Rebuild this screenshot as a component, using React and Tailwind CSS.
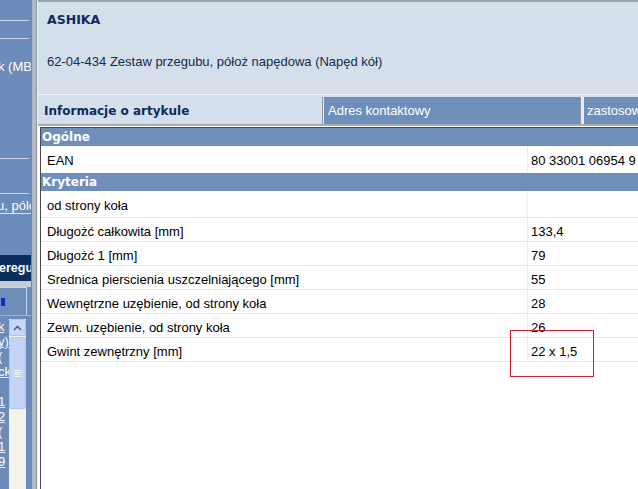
import React from "react";

const SANS = { fontFamily: '"Liberation Sans", Arial, sans-serif' };
const BOLD = { fontFamily: '"DejaVu Sans", Verdana, sans-serif' };

const kryteria = [
  ["od strony koła", ""],
  ["Długożć całkowita [mm]", "133,4"],
  ["Długożć 1 [mm]", "79"],
  ["Srednica pierscienia uszczelniającego [mm]", "55"],
  ["Wewnętrzne uzębienie, od strony koła", "28"],
  ["Zewn. uzębienie, od strony koła", "26"],
  ["Gwint zewnętrzny [mm]", "22 x 1,5"],
];

const listItems = ["k", "y)", "(", "ck", "", "1", "2", "(", "1", "9"];

function Sidebar() {
  return (
    <div className="w-[31px] shrink-0 h-full bg-[#6b8bba] flex flex-col overflow-hidden text-white text-[13px]" style={SANS}>
      <div className="h-[20px] shrink-0" />
      <div className="h-px bg-[#c9d6ea] mr-[2px] shrink-0" />
      <div className="h-[17px] shrink-0" />
      <div className="h-px bg-[#c9d6ea] mr-[2px] shrink-0" />
      <div className="h-[20px] shrink-0" />
      <div className="whitespace-nowrap -ml-[2px] leading-[15px] shrink-0">k (MB</div>
      <div className="h-[84px] shrink-0" />
      <div className="h-px bg-[#c9d6ea] mr-[2px] shrink-0" />
      <div className="h-[34px] shrink-0" />
      <div className="h-px bg-[#c9d6ea] mr-[2px] shrink-0" />
      <div className="h-[4px] shrink-0" />
      <div className="whitespace-nowrap -ml-[3px] leading-[15px] border-b border-[#dfe7f3] shrink-0">u, pólo</div>
      <div className="h-[41px] shrink-0" />
      <div className="h-[26px] shrink-0 bg-[#0c2e5e] flex items-center whitespace-nowrap -ml-[1px] font-bold text-[12.5px]" style={SANS}>
        eregu
      </div>
      <div className="h-[6px] shrink-0 bg-[#c4ccd6]" />
      <div className="h-[28px] shrink-0 mr-[4px] bg-[#6d8dbb] border-t border-r border-[#c8d6ec] flex items-center pl-[1px]">
        <span className="w-[4px] h-[8px] bg-[#1030b0] inline-block" />
      </div>
      <div className="relative flex-1 border-t border-[#9fb3d2]">
        <div className="flex flex-col pt-[3px]">
          {listItems.map((t, i) => (
            <div key={i} className="h-[15px] leading-[15px] whitespace-nowrap -ml-[2px] underline decoration-[#e8eef8]">
              {t}
            </div>
          ))}
        </div>
        <div className="absolute left-[9px] top-[3px] w-[17px] bottom-0 bg-[#f4f3ee] flex flex-col">
          <div className="h-[17px] bg-[#c6d7f7] border border-[#b0c4ea] rounded-[2px] flex items-center justify-center">
            <svg width="9" height="6" viewBox="0 0 9 6">
              <path d="M1 5 L4.5 1.5 L8 5" fill="none" stroke="#4d6185" strokeWidth="1.6" />
            </svg>
          </div>
          <div className="h-[72px] mt-[1px] bg-[#c3d4f6] border border-[#b3c7ee] rounded-[2px] flex items-center justify-center">
            <div className="flex flex-col gap-[1px]">
              <div className="w-[7px] h-px bg-[#eef3fd]" />
              <div className="w-[7px] h-px bg-[#eef3fd]" />
              <div className="w-[7px] h-px bg-[#eef3fd]" />
              <div className="w-[7px] h-px bg-[#eef3fd]" />
            </div>
          </div>
        </div>
      </div>
    </div>
  );
}

function HeaderRow({ label }) {
  return (
    <div className="h-[18px] bg-[#6f8fbb] text-white font-bold text-[12px] leading-[18px] pl-[1px]" style={BOLD}>
      {label}
    </div>
  );
}

function DataRow({ label, value, h = "h-[24px]" }) {
  return (
    <div className={`${h} flex border-b border-[#e8e8e2] text-[13px] text-black`} style={SANS}>
      <div className="w-[487px] shrink-0 pl-[6px] pt-[4px] flex items-center border-r border-[#eeeee8]">{label}</div>
      <div className="flex-1 pl-[3px] pt-[4px] flex items-center whitespace-nowrap">{value}</div>
    </div>
  );
}

export default function App() {
  return (
    <div className="w-[638px] h-[489px] overflow-hidden flex bg-white">
      <Sidebar />
      <div className="w-[7px] shrink-0 h-full flex">
        <div className="w-px bg-[#7c8792]" />
        <div className="w-[4px] bg-[#b1b9c2]" />
        <div className="w-px bg-[#8e98a2]" />
        <div className="w-px bg-[#f2f2f2]" />
      </div>
      <div className="flex-1 min-w-0 h-full flex flex-col">
        <div className="h-[2px] bg-[#9aa3ac] shrink-0" />
        <div className="h-[92px] shrink-0 bg-[#d5dfeb] pl-[9px] pt-[10px] text-[#0d2b5c]">
          <div className="font-bold text-[12.5px] leading-[16px]" style={BOLD}>ASHIKA</div>
          <div className="mt-[26px] text-[13px] leading-[16px] text-[#142a50] whitespace-nowrap" style={SANS}>
            62-04-434 Zestaw przegubu, półoż napędowa (Napęd kół)
          </div>
        </div>
        <div className="h-px bg-[#f4f6f9] shrink-0" />
        <div className="h-[2px] bg-[#d5dfeb] shrink-0" />
        <div className="h-[27px] shrink-0 flex bg-[#d5dfeb]">
          <div className="w-[284px] shrink-0 flex items-center pl-[6px] font-bold text-[12px] text-[#0d2b5c]" style={BOLD}>
            Informacje o artykule
          </div>
          <div className="w-px bg-[#8e98a2]" />
          <div className="w-px bg-[#e8ecf0]" />
          <div className="w-[256px] shrink-0 bg-[#6f8fbb] flex items-center pl-[4px] text-white text-[13px]" style={SANS}>
            Adres kontaktowy
          </div>
          <div className="w-px bg-[#8e98a2]" />
          <div className="w-[3px] bg-[#e8ecf0]" />
          <div className="flex-1 bg-[#6f8fbb] flex items-center pl-[3px] text-white text-[13px] whitespace-nowrap overflow-hidden" style={SANS}>
            zastosowanie
          </div>
        </div>
        <div className="h-[2px] bg-[#a4acb5] shrink-0" />
        <div className="h-px bg-white shrink-0" />
        <div className="relative flex-1 pl-[2px] bg-white">
          <div className="h-full border-l border-t border-[#4a4a4a]">
            <HeaderRow label="Ogólne" />
            <div className="h-[27px] flex text-[13px] text-black" style={SANS}>
              <div className="w-[487px] shrink-0 pl-[6px] pt-[2px] flex items-center border-r border-[#eeeee8]">EAN</div>
              <div className="flex-1 pl-[3px] pt-[2px] flex items-center whitespace-nowrap">80 33001 06954 9</div>
            </div>
            <HeaderRow label="Kryteria" />
            {kryteria.map(([l, v], i) => (
              <DataRow key={i} label={l} value={v} h={i === 0 ? "h-[27px]" : "h-[24px]"} />
            ))}
          </div>
          <div className="absolute left-[472px] top-[203px] w-[84px] h-[47px] border border-[#c8202c]" />
        </div>
      </div>
    </div>
  );
}
